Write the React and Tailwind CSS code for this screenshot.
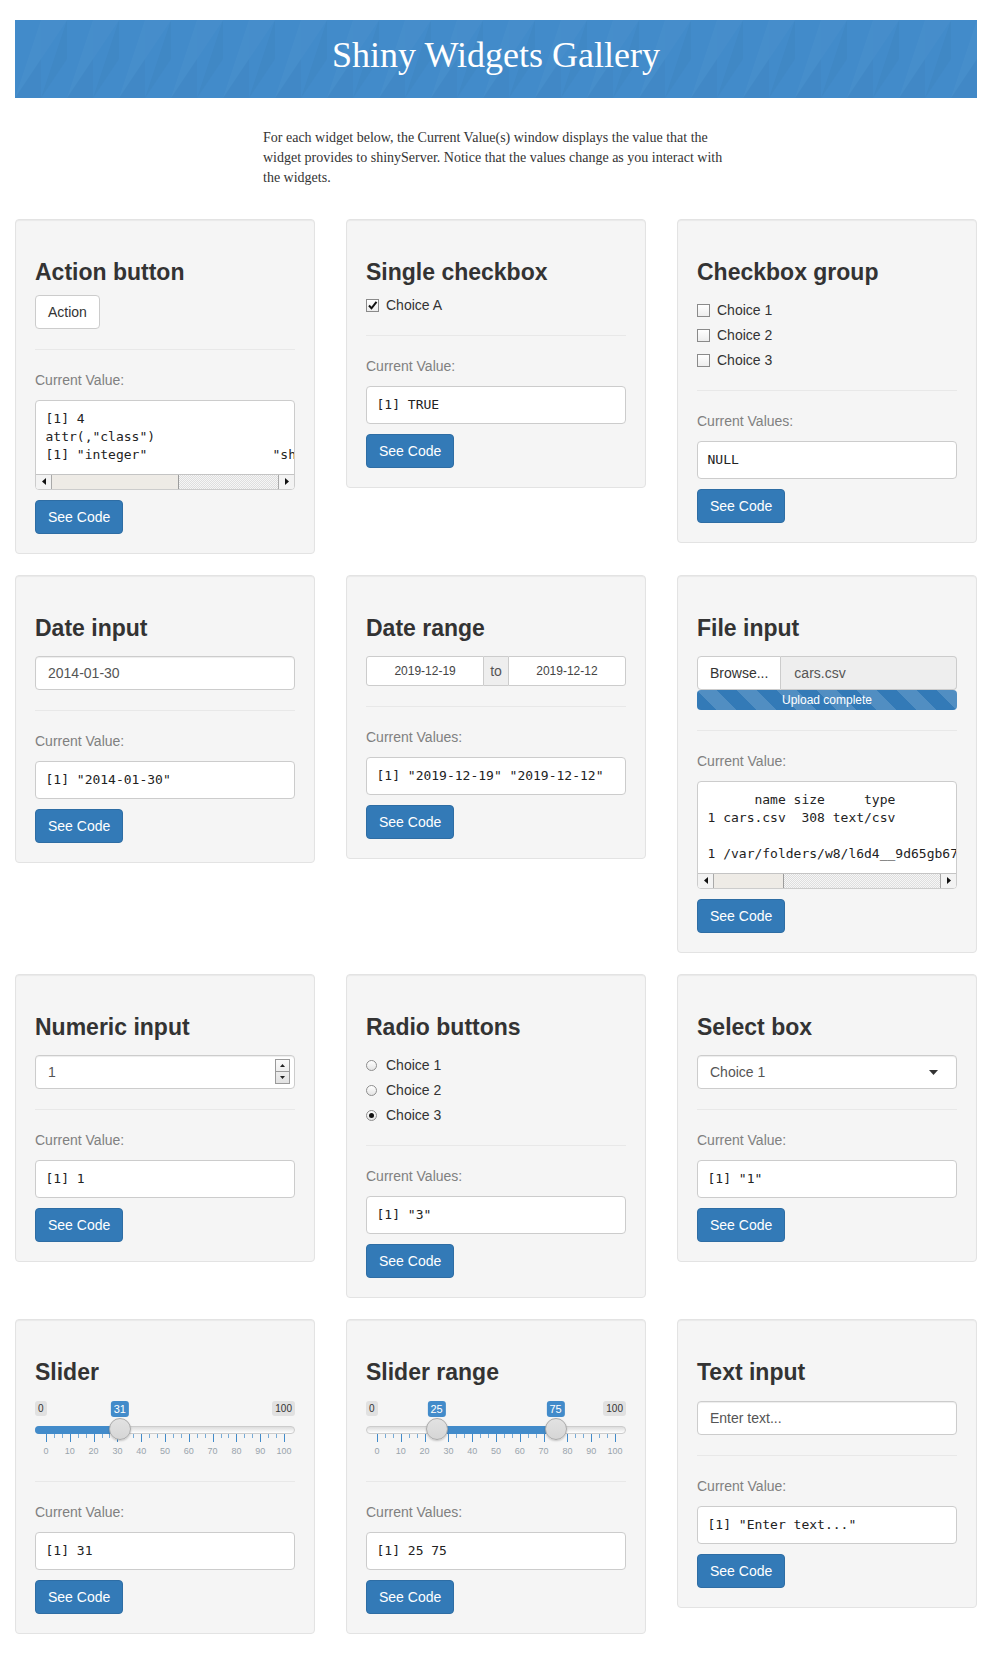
import React from "react";

const mono = "font-['DejaVu_Sans_Mono',Menlo,monospace]";

function Banner() {
  return (
    <div className="relative mx-[15px] h-[78px] overflow-hidden bg-[#428bca]">
      <svg className="absolute inset-0 h-full w-full" aria-hidden="true">
        <defs>
          <pattern id="tri" width="52" height="78" patternUnits="userSpaceOnUse">
            <polygon points="0,78 26,0 26,39" fill="#ffffff" opacity="0.025" />
            <polygon points="26,78 52,0 52,39" fill="#000000" opacity="0.025" />
            <polygon points="26,39 52,0 26,0" fill="#ffffff" opacity="0.02" />
            <polygon points="0,78 26,39 26,78" fill="#000000" opacity="0.02" />
          </pattern>
        </defs>
        <rect width="100%" height="100%" fill="url(#tri)" />
      </svg>
      <div className="relative flex h-full items-center justify-center pb-[8px]">
        <h1 className="font-['Liberation_Serif','Times_New_Roman',serif] text-[36px] leading-none text-white">
          Shiny Widgets Gallery
        </h1>
      </div>
    </div>
  );
}

function Scrollbar({ thumb }) {
  return (
    <div className="flex h-[15px] border-t border-[#c4c4c4] bg-[#f0f0f0]">
      <div className="flex w-[16px] items-center justify-center border-r border-[#a9a9a9] bg-[#f3f3f3]">
        <svg width="4" height="7" viewBox="0 0 4 7">
          <path d="M4 0L0 3.5 4 7z" fill="#111" />
        </svg>
      </div>
      <div className={`h-full border-r border-[#9c9c9c] bg-[#eeebe6] ${thumb}`} />
      <div className="flex-1 bg-[image:repeating-conic-gradient(#dedede_0_25%,#f6f6f6_0_50%)] bg-[length:2px_2px]" />
      <div className="flex w-[16px] items-center justify-center border-l border-[#a9a9a9] bg-[#f3f3f3]">
        <svg width="4" height="7" viewBox="0 0 4 7">
          <path d="M0 0L4 3.5 0 7z" fill="#111" />
        </svg>
      </div>
    </div>
  );
}

function Pre({ lines, thumb }) {
  return (
    <div className="mt-[10px] overflow-hidden rounded-[4px] border border-[#ccc] bg-white">
      <div
        className={`overflow-hidden whitespace-pre px-[9.5px] text-[13px] leading-[18px] text-[#222] ${mono} ${
          thumb ? "pt-[9px] pb-[9.5px]" : "py-[9px]"
        }`}
      >
        {lines.join("\n")}
      </div>
      {thumb && <Scrollbar thumb={thumb} />}
    </div>
  );
}

function Well({ title, label = "Current Value:", lines, thumb, children }) {
  return (
    <div className="flex flex-col rounded-[4px] border border-[#e3e3e3] bg-[#f5f5f5] p-[19px] shadow-[inset_0_1px_1px_rgba(0,0,0,0.05)]">
      <h3 className="mt-[20px] h-[26.4px] text-[23px] font-bold leading-[26.4px] text-[#333]">{title}</h3>
      {children}
      <div className="mt-[20px] border-t border-[#e8e8e8]" />
      <p className="mt-[20px] text-[#808080]">{label}</p>
      <Pre lines={lines} thumb={thumb} />
      <button className="mt-[10px] h-[34px] self-start rounded-[4px] border border-[#2e6da4] bg-[#337ab7] px-[12px] text-[14px] text-white">
        See Code
      </button>
    </div>
  );
}

function TextBox({ children, className = "" }) {
  return (
    <div
      className={`mt-[15px] flex h-[34px] items-center rounded-[4px] border border-[#ccc] bg-white px-[12px] text-[#555] shadow-[inset_0_1px_1px_rgba(0,0,0,0.075)] ${className}`}
    >
      {children}
    </div>
  );
}

function Check({ checked, label }) {
  return (
    <div className="flex h-[20px] items-center">
      <span className="flex w-[20px]">
        <span className="flex h-[13px] w-[13px] items-center justify-center border border-[#8a8a8a] bg-[linear-gradient(#fff,#ededed)]">
          {checked && (
            <svg width="11" height="11" viewBox="0 0 11 11">
              <path d="M2 5.5l2.5 2.8L9.5 1.8" fill="none" stroke="#111" strokeWidth="2" />
            </svg>
          )}
        </span>
      </span>
      <span>{label}</span>
    </div>
  );
}

function Radio({ checked, label }) {
  return (
    <div className="flex h-[20px] items-center">
      <span className="flex w-[20px]">
        <span className="flex h-[11px] w-[11px] items-center justify-center rounded-full border border-[#8e8e8e] bg-[linear-gradient(#fff,#e4e4e4)]">
          {checked && <span className="h-[5px] w-[5px] rounded-full bg-[#111]" />}
        </span>
      </span>
      <span>{label}</span>
    </div>
  );
}

function Slider({ values }) {
  const at = (v) => `calc(11px + (100% - 22px) * ${v / 100})`;
  const ticks = [];
  for (let i = 0; i <= 10; i++) {
    ticks.push({ p: i * 10, big: true });
    if (i < 10) {
      ticks.push({ p: i * 10 + 10 / 3, big: false });
      ticks.push({ p: i * 10 + 20 / 3, big: false });
    }
  }
  const range = values.length === 2;
  const barStyle = range
    ? { left: at(values[0]), width: `calc((100% - 22px) * ${(values[1] - values[0]) / 100})` }
    : { left: 0, width: at(values[0]) };

  return (
    <div className="relative mt-[15px] h-[60px]">
      <span className="absolute left-0 top-0 rounded-[3px] bg-[#e1e1e1] px-[3px] py-px text-[10px] leading-[13.3px] text-[#333]">
        0
      </span>
      <span className="absolute right-0 top-0 rounded-[3px] bg-[#e1e1e1] px-[3px] py-px text-[10px] leading-[13.3px] text-[#333]">
        100
      </span>
      <div className="absolute left-0 right-0 top-[25px] h-[8px] rounded-full border border-[#ccc] bg-[linear-gradient(#dcdcdc,#ffffff)]" />
      <div
        className={`absolute top-[25px] h-[8px] bg-[#428bca] ${range ? "" : "rounded-l-full"}`}
        style={barStyle}
      />
      {ticks.map((t) => (
        <span
          key={t.p}
          className={`absolute top-[33px] w-px bg-[#428bca] ${t.big ? "h-[8px]" : "h-[4px] opacity-70"}`}
          style={{ left: at(t.p) }}
        />
      ))}
      {ticks
        .filter((t) => t.big)
        .map((t) => (
          <span
            key={t.p}
            className="absolute top-[46px] -translate-x-1/2 text-[9px] leading-[9px] text-[#99a4ac]"
            style={{ left: at(t.p) }}
          >
            {t.p}
          </span>
        ))}
      {values.map((v) => (
        <span
          key={`h${v}`}
          className="absolute top-[17px] h-[22px] w-[22px] -translate-x-1/2 rounded-full border border-[#aaa] bg-[linear-gradient(#e2e2e2,#d6d6d6)] shadow-[0_1px_2px_rgba(0,0,0,0.2)]"
          style={{ left: at(v) }}
        />
      ))}
      {values.map((v) => (
        <span
          key={`l${v}`}
          className="absolute top-0 -translate-x-1/2 rounded-[3px] bg-[#428bca] px-[3px] py-px text-[11px] leading-[14px] text-white"
          style={{ left: at(v) }}
        >
          {v}
        </span>
      ))}
    </div>
  );
}

export default function App() {
  return (
    <div className="w-[992px] bg-white pb-[20px] pt-[20px] font-['Liberation_Sans',Arial,sans-serif] text-[14px] leading-[20px] text-[#333]">
      <Banner />

      <p className="mx-auto mt-[30px] w-[466px] font-['Liberation_Serif','Times_New_Roman',serif] text-[14px] leading-[20px] text-[#333]">
        For each widget below, the Current Value(s) window displays the value that the widget provides to shinyServer.
        Notice that the values change as you interact with the widgets.
      </p>

      <div className="mt-[31px] grid grid-cols-3 items-start gap-x-[31px] gap-y-[21px] px-[15px]">
        {/* row 1 */}
        <Well
          title="Action button"
          lines={["[1] 4", 'attr(,"class")', '[1] "integer"                "shinyActionButtonValue"']}
          thumb="w-[127px]"
        >
          <button className="mt-[10px] h-[34px] self-start rounded-[4px] border border-[#ccc] bg-white px-[12px] text-[14px] text-[#333]">
            Action
          </button>
        </Well>

        <Well title="Single checkbox" lines={["[1] TRUE"]}>
          <div className="mt-[10px]">
            <Check checked label="Choice A" />
          </div>
        </Well>

        <Well title="Checkbox group" label="Current Values:" lines={["NULL"]}>
          <div className="mt-[15px] flex flex-col gap-[5px]">
            <Check label="Choice 1" />
            <Check label="Choice 2" />
            <Check label="Choice 3" />
          </div>
        </Well>

        {/* row 2 */}
        <Well title="Date input" lines={['[1] "2014-01-30"']}>
          <TextBox>2014-01-30</TextBox>
        </Well>

        <Well title="Date range" label="Current Values:" lines={['[1] "2019-12-19" "2019-12-12"']}>
          <div className="mt-[15px] flex h-[30px] text-[12px] text-[#444]">
            <div className="flex flex-1 items-center justify-center rounded-l-[3px] border border-[#ccc] bg-white">
              2019-12-19
            </div>
            <div className="flex items-center border-y border-[#ccc] bg-[#eee] px-[6px] text-[14px] text-[#555]">to</div>
            <div className="flex flex-1 items-center justify-center rounded-r-[3px] border border-[#ccc] bg-white">
              2019-12-12
            </div>
          </div>
        </Well>

        <Well
          title="File input"
          lines={[
            "      name size     type",
            "1 cars.csv  308 text/csv",
            "                                                      datapath",
            "1 /var/folders/w8/l6d4__9d65gb67dnq2chmfdyw0000gn/T//RtmpY4mTFA/0.csv",
          ]}
          thumb="w-[70px]"
        >
          <div className="mt-[15px] flex h-[34px]">
            <div className="flex items-center rounded-l-[4px] border border-[#ccc] bg-white px-[12px] text-[#333]">
              Browse...
            </div>
            <div className="flex flex-1 items-center rounded-r-[4px] border border-l-0 border-[#ccc] bg-[#eee] px-[13px] text-[#555]">
              cars.csv
            </div>
          </div>
          <div className="h-[20px] rounded-[4px] bg-[#337ab7] bg-[image:linear-gradient(45deg,rgba(255,255,255,.15)_25%,transparent_25%,transparent_50%,rgba(255,255,255,.15)_50%,rgba(255,255,255,.15)_75%,transparent_75%,transparent)] bg-[length:40px_40px] text-center text-[12px] leading-[20px] text-white">
            Upload complete
          </div>
        </Well>

        {/* row 3 */}
        <Well title="Numeric input" lines={["[1] 1"]}>
          <TextBox className="relative">
            1
            <div className="absolute right-[4px] top-[3px] flex h-[25px] w-[15px] flex-col border border-[#9a9a9a] bg-[linear-gradient(#fafafa,#e2e2e2)]">
              <div className="flex flex-1 items-center justify-center border-b border-[#9a9a9a]">
                <svg width="5" height="3" viewBox="0 0 5 3">
                  <path d="M0 3L2.5 0 5 3z" fill="#222" />
                </svg>
              </div>
              <div className="flex flex-1 items-center justify-center">
                <svg width="5" height="3" viewBox="0 0 5 3">
                  <path d="M0 0L2.5 3 5 0z" fill="#222" />
                </svg>
              </div>
            </div>
          </TextBox>
        </Well>

        <Well title="Radio buttons" label="Current Values:" lines={['[1] "3"']}>
          <div className="mt-[15px] flex flex-col gap-[5px]">
            <Radio label="Choice 1" />
            <Radio label="Choice 2" />
            <Radio checked label="Choice 3" />
          </div>
        </Well>

        <Well title="Select box" lines={['[1] "1"']}>
          <TextBox className="justify-between pr-[18px] text-[#333]">
            <span>Choice 1</span>
            <svg width="9" height="5" viewBox="0 0 9 5">
              <path d="M0 0h9L4.5 5z" fill="#333" />
            </svg>
          </TextBox>
        </Well>

        {/* row 4 */}
        <Well title="Slider" lines={["[1] 31"]}>
          <Slider values={[31]} />
        </Well>

        <Well title="Slider range" label="Current Values:" lines={["[1] 25 75"]}>
          <Slider values={[25, 75]} />
        </Well>

        <Well title="Text input" lines={['[1] "Enter text..."']}>
          <TextBox>Enter text...</TextBox>
        </Well>
      </div>
    </div>
  );
}
